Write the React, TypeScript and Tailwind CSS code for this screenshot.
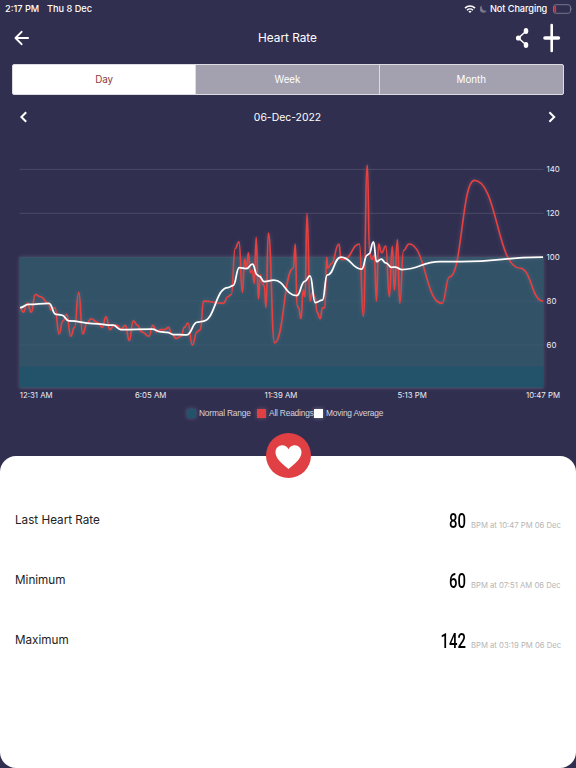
import { JSX } from 'react'

type Point = [number, number]

const readings: Point[] = [
  [20, 77], [23.3, 75], [27.3, 79], [31.3, 75], [35.3, 83], [40.5, 82], [48.3, 79], [50.9, 76],
  [55, 77], [59, 65], [62.9, 71], [66.7, 74], [70.7, 64], [74.5, 68], [78.7, 84], [82.7, 65],
  [87, 70], [91, 72], [97, 70.5], [102.3, 68], [106, 73], [109.8, 67], [114, 69], [117.6, 69],
  [121, 67], [125.3, 69], [129.3, 62], [133.3, 71], [137.5, 69], [141.7, 66], [149, 64], [152.8, 69],
  [156.7, 66], [161, 67], [165, 67], [168.4, 68], [171.8, 65], [176, 63], [181.3, 64], [184.3, 68],
  [188, 70], [192.3, 60], [197, 66], [200.4, 67], [203.5, 80], [223.3, 79], [228, 82], [231.3, 83],
  [235.2, 104], [239, 107], [242.3, 84], [244.7, 99], [246.6, 95], [248.4, 102], [250.4, 93],
  [252.3, 94], [254.3, 88], [256.2, 109], [258.4, 81], [260.4, 92], [262.3, 88], [264.3, 87],
  [266, 77], [268.3, 111], [274.6, 61], [293.3, 95], [295.3, 106], [297, 78], [298.6, 77],
  [301, 72], [303.2, 85], [305, 82], [307, 120], [310, 80], [312.4, 84], [315, 82], [317, 75],
  [320.3, 72], [322.4, 77], [324.8, 77], [326.7, 100], [327.7, 95], [331.2, 97], [339, 106],
  [341, 99], [344, 99], [359.4, 106], [363.3, 73], [367.3, 142], [369.6, 102], [371.8, 99],
  [374.3, 101], [376.4, 80], [378.6, 106], [381.6, 102], [385.8, 105], [389.3, 82], [392.3, 105],
  [394.4, 85], [397.4, 108], [399.8, 79], [403.5, 103], [409, 106], [442, 79], [449.5, 91],
  [474.3, 135], [520, 95], [543, 80]
]

const average: Point[] = [
  [20, 77], [28.5, 78.5], [49, 79], [55.8, 74], [61.6, 73.6], [69, 71], [93, 69.8], [113, 69],
  [121, 67], [152, 67.2], [161, 66], [167, 65.8], [173.5, 64.8], [186.5, 64.6], [197.5, 70.4],
  [202.5, 70.8], [228, 86.2], [233, 87], [239.3, 95.2], [246.3, 94.8], [252.4, 96.8], [257.3, 92],
  [259, 91.4], [264.3, 88.9], [273.8, 89.5], [296.7, 82.5], [304.8, 89], [310, 91.5], [315.3, 79.3],
  [322.4, 80.4], [327.2, 91.9], [341, 100.1], [361.7, 94.6], [367.2, 101], [369, 101.5],
  [373.5, 107], [376.5, 98], [381.3, 99.2], [385.7, 97.4], [391.5, 95.4], [395, 95.5],
  [401.7, 94.4], [440, 98], [461, 98], [543, 100]
]

const ticks = [140, 120, 100, 80, 60]

const toY = (bpm: number): number => 257.2 + (100 - bpm) * 2.195

// every segment leaves and arrives horizontally
function curve(points: Point[]): string {
  return points
    .map(([x, bpm], i) => {
      const y = toY(bpm).toFixed(1)
      if (i === 0) return `M${x} ${y}`
      const [px, pBpm] = points[i - 1]
      const mid = ((px + x) / 2).toFixed(2)
      return `C${mid} ${toY(pBpm).toFixed(1)} ${mid} ${y} ${x} ${y}`
    })
    .join('')
}

function StatusBar(): JSX.Element {
  return (
    <div className="flex h-4 items-center justify-between pl-[5px] pr-[3px] pt-px text-[9.2px] font-medium leading-4">
      <div className="flex gap-[8px]">
        <span className="w-[34px] whitespace-nowrap">2:17 PM</span>
        <span>Thu 8 Dec</span>
      </div>
      <div className="flex items-center">
        <svg width="12" height="8" viewBox="0 0 12 8" fill="none" stroke="white" strokeWidth="1.5">
          <path d="M1 3.1a7.1 7.1 0 0 1 10 0" />
          <path d="M3 5.2a4.3 4.3 0 0 1 6 0" />
          <path d="M6 8 4.4 6.4a2.3 2.3 0 0 1 3.2 0Z" fill="white" stroke="none" />
        </svg>
        <svg className="ml-[4px]" width="7" height="8" viewBox="0 0 7 8" fill="#77758b">
          <path d="M2 .5A3.8 3.8 0 1 0 6.8 5.7 4 4 0 0 1 2 .5Z" />
        </svg>
        <span className="ml-[3px] w-[59px] whitespace-nowrap tracking-[-0.08px]">Not Charging</span>
        <svg className="ml-[4px]" width="20" height="10" viewBox="0 0 20 10">
          <rect x=".5" y=".7" width="17" height="8.6" rx="2.3" fill="none" stroke="#77758b" />
          <rect x="1.4" y="1.8" width="1.7" height="6.4" rx=".6" fill="#e8353d" />
          <path d="M18.5 3.4q1.4 1.6 0 3.2Z" fill="#77758b" />
        </svg>
      </div>
    </div>
  )
}

function Header(): JSX.Element {
  return (
    <div className="grid h-11 grid-cols-3 items-center pl-[14px] pr-[15px]">
      <svg width="16" height="16" viewBox="0 0 16 16" fill="none" stroke="white" strokeWidth="1.9" strokeLinecap="round" strokeLinejoin="round">
        <path d="M7.6 1.8 1.5 8l6.1 6.2M1.7 8h12.4" />
      </svg>
      <h1 className="pt-[2px] text-center text-[11.8px]">Heart Rate</h1>
      <div className="flex items-center justify-end gap-[13px]">
        <svg width="15" height="22" viewBox="0 0 15 22">
          <path d="M11.2 4 3.5 11l7.7 7" fill="none" stroke="white" strokeWidth="1.5" />
          <ellipse cx="11" cy="4" rx="2.3" ry="3" fill="white" />
          <ellipse cx="3.4" cy="11" rx="2.5" ry="2.6" fill="white" />
          <ellipse cx="11" cy="18" rx="2.3" ry="3" fill="white" />
        </svg>
        <svg width="18" height="30" viewBox="0 0 18 30" stroke="white" strokeLinecap="round">
          <path d="M8.7 2v26" strokeWidth="2.6" />
          <path d="M2 15h13.4" strokeWidth="3.6" />
        </svg>
      </div>
    </div>
  )
}

function Tabs(): JSX.Element {
  return (
    <div className="mx-3 mt-1 grid h-[31px] grid-cols-3 divide-x divide-[#dcdbe2] overflow-hidden rounded-[2px] border border-[#dcdbe2] bg-[#a3a1b0] text-center text-[9.8px] leading-[30px]">
      <div className="bg-white text-[#8a3a44]">Day</div>
      <div>Week</div>
      <div>Month</div>
    </div>
  )
}

function DateRow(): JSX.Element {
  return (
    <div className="flex h-11 items-center justify-between pl-[19px] pr-5 text-[10.4px]">
      <svg width="9" height="12" viewBox="0 0 9 12" fill="none" stroke="white" strokeWidth="2">
        <path d="M7.2 1.2 2.4 6l4.8 4.8" />
      </svg>
      <span className="pt-px">06-Dec-2022</span>
      <svg width="9" height="12" viewBox="0 0 9 12" fill="none" stroke="white" strokeWidth="2">
        <path d="M2.4 1.2 7.2 6l-4.8 4.8" />
      </svg>
    </div>
  )
}

function Chart(): JSX.Element {
  return (
    <svg className="block" width="576" height="262" viewBox="0 139 576 262">
      <defs>
        <filter id="glow" filterUnits="userSpaceOnUse" x="0" y="139" width="576" height="262" colorInterpolationFilters="sRGB">
          <feDropShadow dx="0" dy="0" stdDeviation="2" floodColor="#a8a0ac" floodOpacity="0.3" />
        </filter>
      </defs>
      <rect x="19.5" y="257" width="524" height="130.7" fill="#22536a" filter="url(#glow)" />
      <rect x="19.5" y="257" width="524" height="109.5" fill="#325268" />
      {ticks.map((bpm) => (
        <g key={bpm}>
          <path d={`M19.5 ${toY(bpm)}H543.5`} stroke="white" strokeOpacity={bpm > 100 ? 0.13 : 0.04} />
          <text x="546.5" y={toY(bpm) + 2.5} fill="#ecebf1" fontSize="7.9">
            {bpm}
          </text>
        </g>
      ))}
      <path d="M19.5 388H543.5" stroke="#55536e" strokeWidth=".7" />
      <g fill="none" strokeLinecap="butt" strokeLinejoin="round" filter="url(#glow)">
        <path d={curve(readings)} stroke="#e8403f" strokeWidth="1.65" />
        <path d={curve(average)} stroke="white" strokeWidth="1.75" />
      </g>
      <g fill="#ecebf1" fontSize="7.8">
        <text x="19.8" y="397.5">12:31 AM</text>
        <text x="135" y="397.5">6:05 AM</text>
        <text x="264.5" y="397.5">11:39 AM</text>
        <text x="397.5" y="397.5">5:13 PM</text>
        <text x="526" y="397.5">10:47 PM</text>
      </g>
    </svg>
  )
}

function Legend(): JSX.Element {
  return (
    <div className="flex h-6 items-center pl-[187px] font-['Liberation_Sans',sans-serif] text-[8.4px] tracking-[-0.2px] text-[#d5d4de]">
      <span className="size-[9px] bg-[#22536a] shadow-[0_0_4px_#55637f]" />
      <span className="ml-[3px] w-[58px] whitespace-nowrap">Normal Range</span>
      <span className="size-[9px] bg-[#e04043] shadow-[0_0_4px_#7b5060]" />
      <span className="ml-[3px] w-[45px] whitespace-nowrap">All Readings</span>
      <span className="size-[9px] bg-white shadow-[0_0_4px_#77758b]" />
      <span className="ml-[3px] whitespace-nowrap">Moving Average</span>
    </div>
  )
}

function Stat({ label, value, time }: { label: string; value: string; time: string }): JSX.Element {
  return (
    <div className="flex h-[60px] items-center justify-between pl-[15px] pr-[15px]">
      <span className="pt-[2px] text-[11.7px] text-[#222]">{label}</span>
      <div className="mt-[2px] flex items-baseline gap-[5px]">
        <span className="w-[40px] origin-right scale-x-[0.71] text-right font-['Roboto',sans-serif] text-[21px] font-medium leading-[30px] text-black">
          {value}
        </span>
        <span className="w-[90px] whitespace-nowrap text-[7.7px] text-[#b5b5b5]">BPM at {time} 06 Dec</span>
      </div>
    </div>
  )
}

function App(): JSX.Element {
  return (
    <div className="flex h-[768px] w-[576px] flex-col overflow-hidden bg-[#312f50] font-['Inter',sans-serif] text-white">
      <StatusBar />
      <Header />
      <Tabs />
      <DateRow />
      <Chart />
      <Legend />
      <div className="relative mt-[31px] h-[312px] rounded-2xl bg-white pt-[34px]">
        <div className="absolute -top-[23px] left-[265.5px] flex size-[45px] items-center justify-center rounded-full bg-[#e04043]">
          <svg className="mt-[2px]" width="27" height="24" viewBox="0 0 27 24" fill="white">
            <path d="M13.5 24C7 18.7.5 13.5.5 7.2.5 3.2 3.5.3 7.2.3c2.7 0 5 1.4 6.3 3.9C14.8 1.7 17.1.3 19.8.3c3.7 0 6.7 2.9 6.7 6.9 0 6.3-6.5 11.5-13 16.8Z" />
          </svg>
        </div>
        <Stat label="Last Heart Rate" value="80" time="10:47 PM" />
        <Stat label="Minimum" value="60" time="07:51 AM" />
        <Stat label="Maximum" value="142" time="03:19 PM" />
      </div>
    </div>
  )
}

export default App
